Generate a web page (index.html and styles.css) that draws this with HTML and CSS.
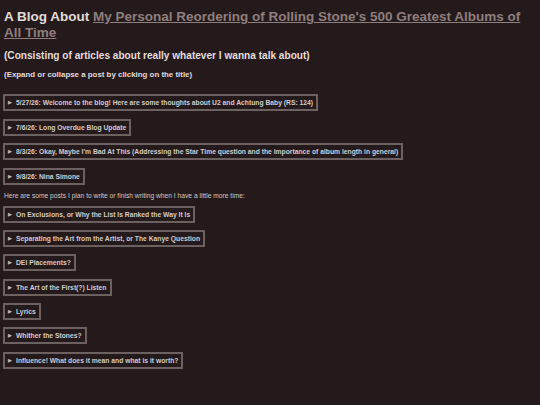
FILE: index.html
```html
<!DOCTYPE html>
<html lang="en">
<head>
<meta charset="utf-8">
<title>A Blog About My Personal Reordering of Rolling Stone's 500 Greatest Albums of All Time</title>
<link rel="stylesheet" href="styles.css">
</head>
<body>
<h1 class="title"><span class="title-lead">A Blog About</span> <a class="title-link" href="#">My Personal Reordering of Rolling Stone's 500 Greatest Albums of All Time</a></h1>
<h2 class="subtitle">(Consisting of articles about really whatever I wanna talk about)</h2>
<p class="hint">(Expand or collapse a post by clicking on the title)</p>

<div class="posts">
  <details class="post"><summary class="post-title">5/27/26: Welcome to the blog! Here are some thoughts about U2 and Achtung Baby (RS: 124)</summary></details>
  <details class="post"><summary class="post-title">7/6/26: Long Overdue Blog Update</summary></details>
  <details class="post"><summary class="post-title">8/3/26: Okay, Maybe I'm Bad At This (Addressing the Star Time question and the importance of album length in general)</summary></details>
  <details class="post"><summary class="post-title">9/8/26: Nina Simone</summary></details>
</div>

<p class="planned">Here are some posts I plan to write or finish writing when I have a little more time:</p>

<div class="posts planned-posts">
  <details class="post"><summary class="post-title">On Exclusions, or Why the List Is Ranked the Way It Is</summary></details>
  <details class="post"><summary class="post-title">Separating the Art from the Artist, or The Kanye Question</summary></details>
  <details class="post"><summary class="post-title">DEI Placements?</summary></details>
  <details class="post"><summary class="post-title">The Art of the First(?) Listen</summary></details>
  <details class="post"><summary class="post-title">Lyrics</summary></details>
  <details class="post"><summary class="post-title">Whither the Stones?</summary></details>
  <details class="post"><summary class="post-title">Influence! What does it mean and what is it worth?</summary></details>
</div>
</body>
</html>
```
FILE: styles.css
```css
html, body {
  background: #251a1b;
}
body {
  margin: 0;
  padding: 0 4px;
  color: #e2dcdc;
  font-family: "Liberation Sans", Arial, sans-serif;
}
.title {
  margin: 9px 0 0;
  font-size: 13.5px;
  line-height: 16px;
  font-weight: bold;
}
.title-link {
  color: #8e7e7e;
  text-decoration: underline;
}
.subtitle {
  margin: 8px 0 0;
  font-size: 10.1px;
  line-height: 14px;
  font-weight: bold;
}
.hint {
  margin: 7px 0 0;
  font-size: 7.9px;
  line-height: 10px;
  font-weight: bold;
}
.posts {
  display: flex;
  flex-direction: column;
  align-items: flex-start;
  gap: 7.5px;
  margin-top: 14px;
  margin-left: -1px;
}
.post {
  display: block;
  border: 2px solid #6c6060;
}
.post-title {
  display: block;
  list-style: none;
  padding: 0 3px 0 3px;
  font-size: 6.75px;
  line-height: 13px;
  font-weight: bold;
  color: #d2cbcb;
  cursor: pointer;
}
.post-title::-webkit-details-marker { display: none; }
.post-title::before {
  content: "\25B6";
  display: inline-block;
  font-size: 4.5px;
  margin-right: 4px;
  vertical-align: 1px;
  color: #bdb5b5;
}
.planned {
  margin: 6px 0 0;
  font-size: 6.7px;
  line-height: 10px;
  color: #cfc7c7;
}
.planned-posts {
  margin-top: 5px;
  gap: 7.4px;
}
```
